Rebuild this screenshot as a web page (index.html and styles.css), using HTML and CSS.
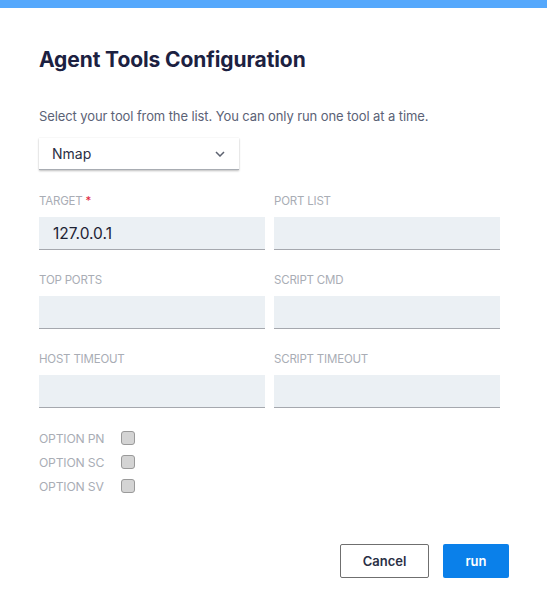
FILE: index.html
```html
<!DOCTYPE html>
<html>
<head>
<meta charset="utf-8">
<link rel="stylesheet" href="styles.css">
</head>
<body>
<div class="topbar"></div>
<div class="dialog">
  <h1 class="title">Agent Tools Configuration</h1>
  <p class="desc">Select your tool from the list. You can only run one tool at a time.</p>
  <div class="select">
    <span>Nmap</span>
    <svg class="chev" width="10" height="6" viewBox="0 0 10 6"><path d="M1 1l4 4 4-4" fill="none" stroke="#5d6270" stroke-width="1.5"/></svg>
  </div>
  <div class="grid">
    <div class="field">
      <div class="label">TARGET <span class="req">*</span></div>
      <div class="input">127.0.0.1</div>
    </div>
    <div class="field">
      <div class="label">PORT LIST</div>
      <div class="input"></div>
    </div>
    <div class="field">
      <div class="label">TOP PORTS</div>
      <div class="input"></div>
    </div>
    <div class="field">
      <div class="label">SCRIPT CMD</div>
      <div class="input"></div>
    </div>
    <div class="field">
      <div class="label">HOST TIMEOUT</div>
      <div class="input"></div>
    </div>
    <div class="field">
      <div class="label">SCRIPT TIMEOUT</div>
      <div class="input"></div>
    </div>
  </div>
  <div class="options">
    <div class="option"><span class="opt-label">OPTION PN</span><span class="check"></span></div>
    <div class="option"><span class="opt-label">OPTION SC</span><span class="check"></span></div>
    <div class="option"><span class="opt-label">OPTION SV</span><span class="check"></span></div>
  </div>
  <div class="actions">
    <button class="btn cancel">Cancel</button>
    <button class="btn run">run</button>
  </div>
</div>
</body>
</html>
```
FILE: styles.css
```css
* { box-sizing: border-box; }
html, body { margin: 0; padding: 0; background: #fff; }
body { font-family: Inter, "Noto Sans", sans-serif; }
.topbar { height: 8px; background: #55a8fc; }
.dialog { padding: 38px 38px 0 39px; }
.title { margin: 0; font-size: 21px; line-height: 28px; font-weight: 700; color: #1c2141; letter-spacing: -0.1px; }
.desc { margin: 33px 0 0; font-size: 13px; line-height: 18px; color: #5b6276; letter-spacing: -0.1px; }
.select { margin-top: 13px; width: 200px; height: 32px; display: flex; align-items: center; justify-content: space-between; padding: 0 14px 0 13px; background: #fff; box-shadow: 0 1px 2px rgba(0,0,0,0.25), 0 0 1px rgba(0,0,0,0.08); border-bottom: 1px solid #a8acb2; font-size: 14px; color: #2a2f45; }
.chev { display: block; }
.grid { margin-top: 24px; width: 461px; display: grid; grid-template-columns: 226px 226px; column-gap: 9px; row-gap: 23px; }
.label { font-size: 11.5px; line-height: 14px; color: #a9adb5; letter-spacing: -0.2px; margin-bottom: 9px; }
.req { color: #e0243c; }
.input { height: 33px; background: #ebf0f4; border-bottom: 1px solid #a5a8ae; padding: 0 14px; display: flex; align-items: center; font-size: 15.5px; color: #1d2233; }
.options { margin-top: 18px; }
.option { display: flex; align-items: center; height: 24px; }
.opt-label { width: 82px; font-size: 12.2px; color: #a9adb5; letter-spacing: -0.2px; }
.check { width: 14px; height: 14px; border: 1px solid #9a9a9a; border-radius: 3px; background: #d4d4d4; }
.actions { margin-top: 46px; display: flex; justify-content: flex-end; gap: 14px; }
.btn { height: 34px; font-family: Inter, "Noto Sans", sans-serif; font-size: 13px; font-weight: 600; border-radius: 2px; cursor: pointer; }
.cancel { width: 89px; background: #fff; border: 1px solid #6f6f6f; color: #2a2f45; }
.run { width: 66px; background: #0a80ea; border: none; color: #fff; }
```
